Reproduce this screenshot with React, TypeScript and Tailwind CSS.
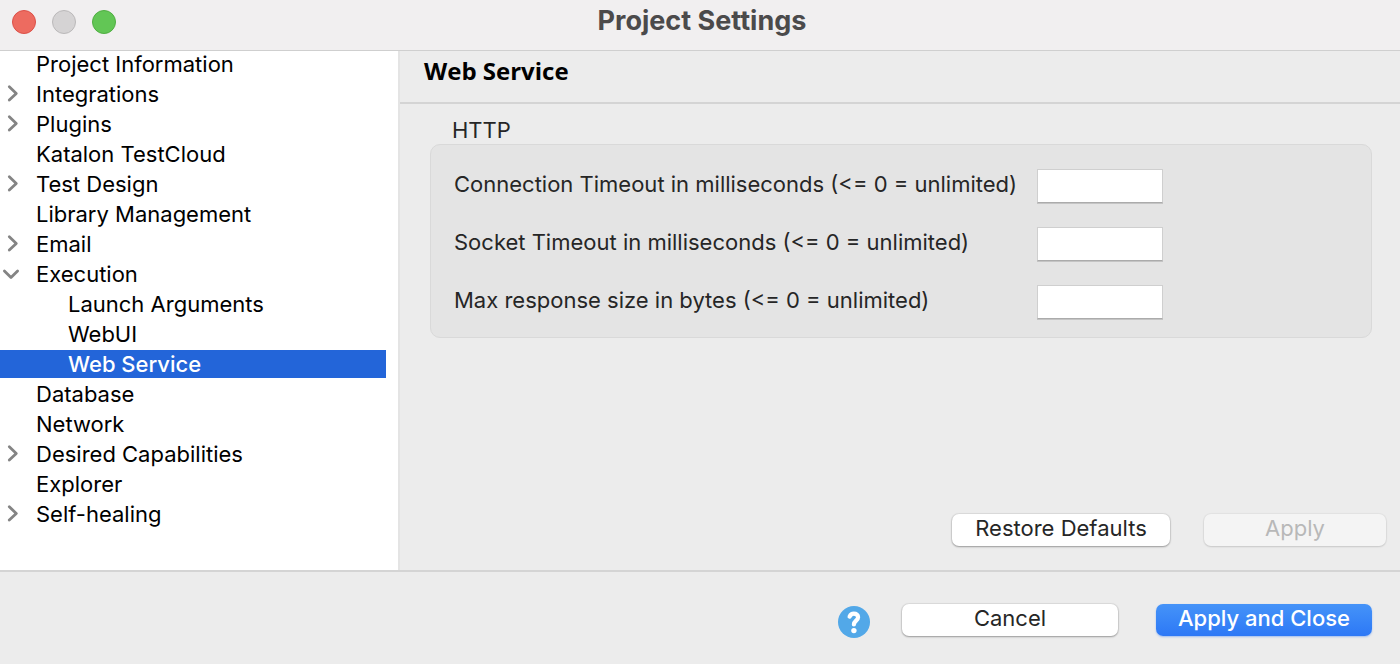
import { useState } from "react";

type Item = { label: string; state?: "closed" | "open"; child?: boolean };

const items: Item[] = [
  { label: "Project Information" },
  { label: "Integrations", state: "closed" },
  { label: "Plugins", state: "closed" },
  { label: "Katalon TestCloud" },
  { label: "Test Design", state: "closed" },
  { label: "Library Management" },
  { label: "Email", state: "closed" },
  { label: "Execution", state: "open" },
  { label: "Launch Arguments", child: true },
  { label: "WebUI", child: true },
  { label: "Web Service", child: true },
  { label: "Database" },
  { label: "Network" },
  { label: "Desired Capabilities", state: "closed" },
  { label: "Explorer" },
  { label: "Self-healing", state: "closed" },
];

const fields = [
  { id: "connection-timeout", label: "Connection Timeout in milliseconds (<= 0 = unlimited)" },
  { id: "socket-timeout", label: "Socket Timeout in milliseconds (<= 0 = unlimited)" },
  { id: "max-response", label: "Max response size in bytes (<= 0 = unlimited)" },
];

function Chevron({ state }: { state?: "closed" | "open" }) {
  return (
    <svg
      viewBox="0 0 24 24"
      className="size-6 shrink-0"
      fill="none"
      stroke="#848484"
      strokeWidth="2.8"
      strokeLinecap="round"
      strokeLinejoin="round"
      aria-hidden="true"
    >
      {state === "closed" && <path d="M9.3 4.8 16.3 11.4 9.3 18" />}
      {state === "open" && <path d="M4.4 9 11 15.6 17.6 9" />}
    </svg>
  );
}

const button =
  "flex h-8 items-center justify-center rounded-[7px] pb-1 text-[22px] leading-7 whitespace-nowrap";
const plain = "bg-white text-[#262626] shadow-[0_0_1px_1px_rgba(0,0,0,0.07),0_1px_2px_rgba(0,0,0,0.3)]";

export default function App() {
  const [selected, setSelected] = useState("Web Service");

  return (
    <div className="flex min-h-screen flex-col bg-[#ececec] font-['Inter','Liberation_Sans',sans-serif] text-[22px] leading-7 text-[#262626]">
      <header className="relative z-10 grid h-[50px] shrink-0 grid-cols-[1fr_auto_1fr] items-center bg-[#f1eff0] pb-2 shadow-[0_1px_0_#cfcfcf]">
        <div className="flex gap-4 pt-0.5 pl-3">
          <button aria-label="Close" className="size-6 rounded-full border border-[#dc5048] bg-[#ed6b60]" />
          <button aria-label="Minimize" className="size-6 rounded-full border border-[#bbb9ba] bg-[#d5d3d4]" />
          <button aria-label="Zoom" className="size-6 rounded-full border border-[#50ae42] bg-[#62c655]" />
        </div>
        <h1 className="pl-1 text-[27px] leading-7 font-bold text-[#4b4a4b]">Project Settings</h1>
      </header>

      <div className="flex flex-1 border-b-2 border-[#d4d4d4]">
        <nav aria-label="Settings" className="w-[400px] shrink-0 border-r-2 border-[#e4e4e4] bg-white pr-3 text-black">
          <ul className="flex flex-col gap-0.5">
            {items.map((item) => (
              <li key={item.label}>
                <button
                  onClick={() => setSelected(item.label)}
                  aria-current={selected === item.label ? "page" : undefined}
                  aria-expanded={item.state ? item.state === "open" : undefined}
                  className={`flex h-7 w-full items-center text-left ${item.child ? "pl-[68px]" : "gap-3"} ${
                    selected === item.label ? "bg-[#2365d9] font-medium text-white" : ""
                  }`}
                >
                  {!item.child && <Chevron state={item.state} />}
                  {item.label}
                </button>
              </li>
            ))}
          </ul>
        </nav>

        <main className="flex min-w-0 flex-1 flex-col">
          <h2 className="border-b-2 border-[#d4d4d4] pt-[7px] pb-[17px] pl-6 font-['Open_Sans','Noto_Sans',sans-serif] text-[24px] leading-7 font-bold text-black">
            Web Service
          </h2>
          <form className="flex flex-1 flex-col justify-between pt-3" onSubmit={(e) => e.preventDefault()}>
            <fieldset className="mr-7 ml-[30px]">
              <legend className="pl-[22px]">HTTP</legend>
              <div className="flex flex-col gap-6 rounded-[10px] border border-[#d9d9d9] bg-[#e4e4e4] pt-6 pb-[18px] pl-[23px]">
                {fields.map((field) => (
                  <div key={field.id} className="flex items-center">
                    <label htmlFor={field.id} className="w-[583px] pb-1 whitespace-nowrap">
                      {field.label}
                    </label>
                    <input
                      id={field.id}
                      type="text"
                      className="h-[34px] w-[126px] border border-[#cfcfcf] border-b-[#ababab] bg-white px-2 shadow-[0_1px_0_#c4c4c4] outline-none"
                    />
                  </div>
                ))}
              </div>
            </fieldset>
            <div className="flex justify-end gap-[34px] pr-3.5 pb-6">
              <button type="button" className={`${button} ${plain} w-[218px]`}>
                Restore Defaults
              </button>
              <button
                type="submit"
                disabled
                className={`${button} w-[182px] bg-[#f4f4f4] text-[#b8b8b8] shadow-[0_0_1px_1px_rgba(0,0,0,0.04),0_1px_2px_rgba(0,0,0,0.12)]`}
              >
                Apply
              </button>
            </div>
          </form>
        </main>
      </div>

      <footer className="flex h-[92px] shrink-0 items-center justify-end pt-1 pr-7">
        <button aria-label="Help" className="mt-1 mr-8 size-8 rounded-full">
          <svg viewBox="0 0 32 32" className="size-8" fill="none" aria-hidden="true">
            <circle cx="16" cy="16" r="16" fill="#52a8e8" />
            <path
              d="M11.6 10.6C12.4 8.8 13.8 7.7 15.8 7.7c2.6 0 4.3 1.4 4.3 3.6 0 3.2-4.2 3.6-4.2 7.2"
              stroke="white"
              strokeWidth="4.2"
              strokeLinecap="round"
              strokeLinejoin="round"
            />
            <circle cx="15.9" cy="24.6" r="2.7" fill="white" />
          </svg>
        </button>
        <button className={`${button} ${plain} mr-[38px] w-[216px]`}>Cancel</button>
        <button
          className={`${button} w-[216px] bg-linear-to-b from-[#4593f8] to-[#2d78f6] font-medium text-white shadow-[0_1px_2px_rgba(45,120,246,0.4)]`}
        >
          Apply and Close
        </button>
      </footer>
    </div>
  );
}
